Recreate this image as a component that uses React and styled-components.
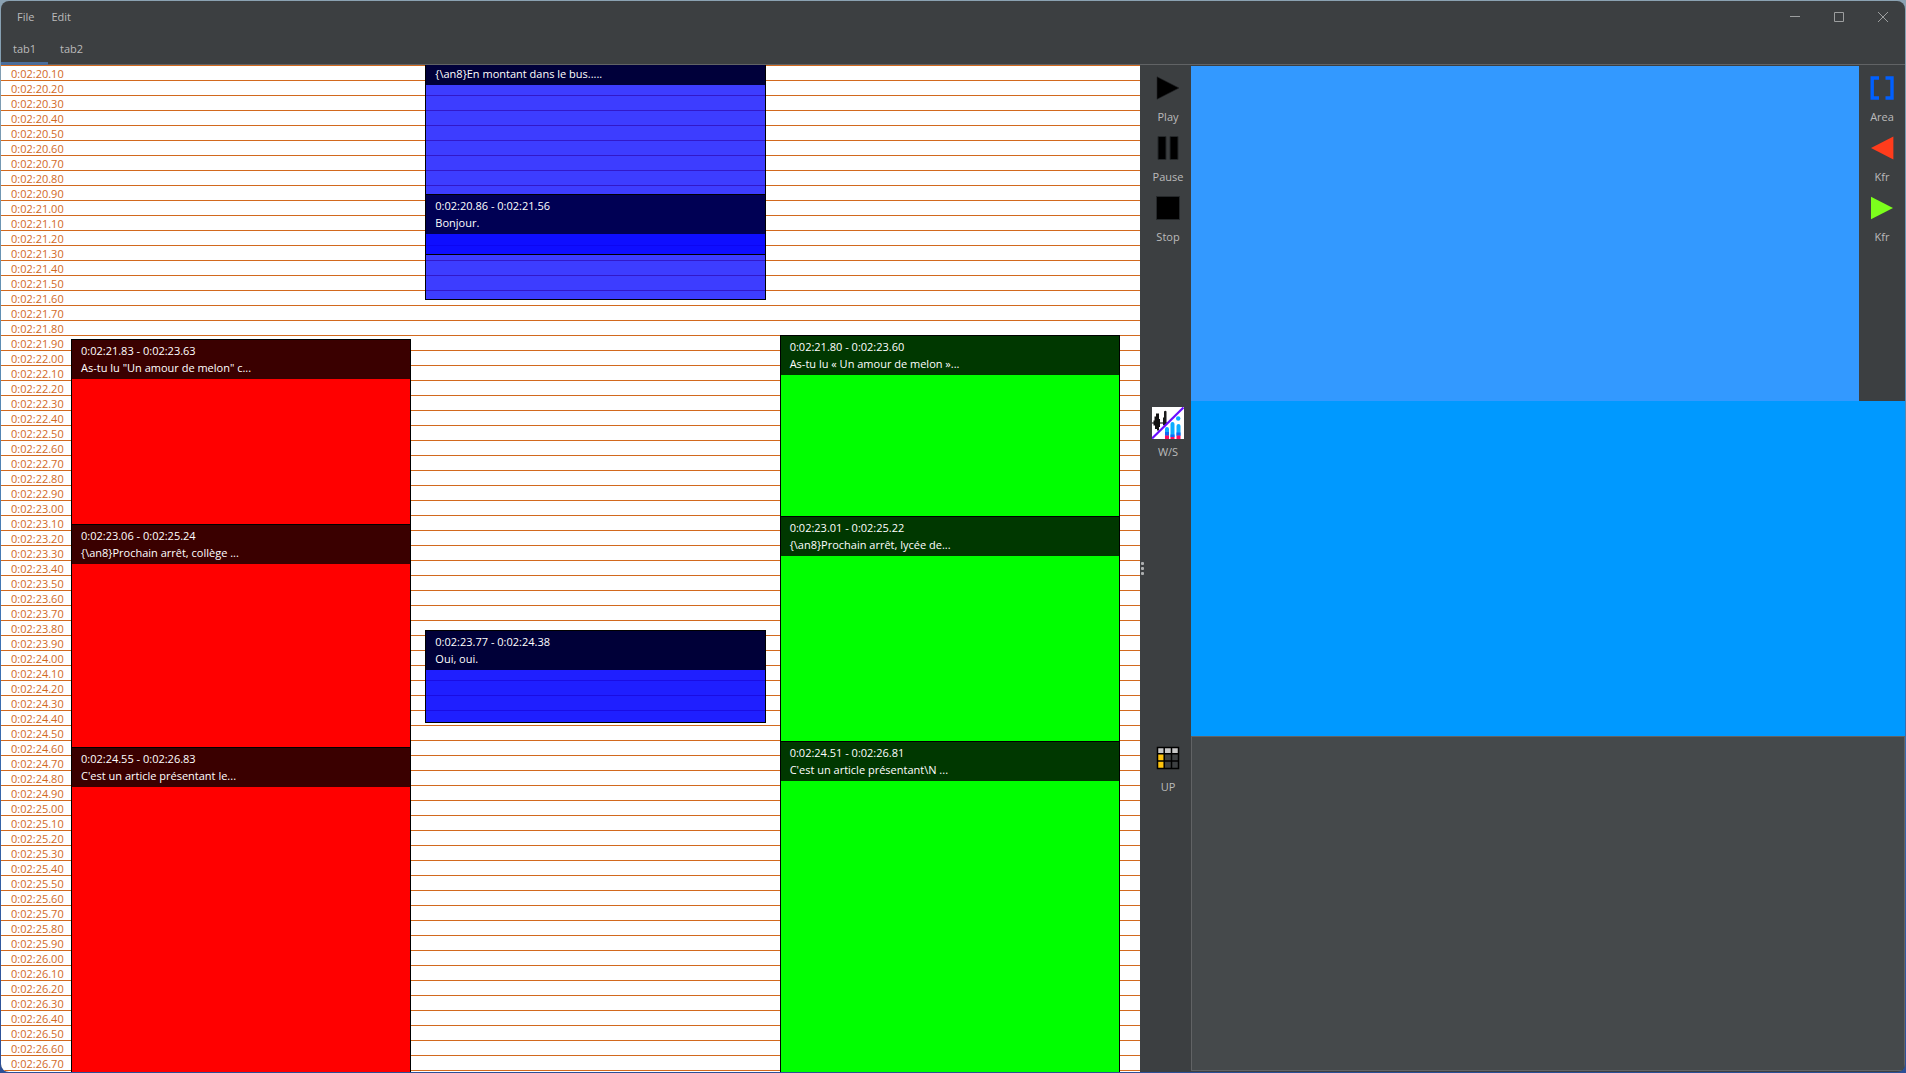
import React, { useState } from "react";
import styled, { createGlobalStyle } from "styled-components";

const GlobalStyle = createGlobalStyle`
  * { box-sizing: border-box; }
  html, body { margin: 0; padding: 0; }
  body {
    font-family: "Open Sans", "Noto Sans", sans-serif;
    font-size: 11px;
    line-height: 16px;
    color: #bbbbbb;
    overflow: hidden;
  }
  button {
    font: inherit;
    color: inherit;
    background: none;
    border: 0;
    padding: 0;
    margin: 0;
  }
`;

const Desktop = styled.div`
  height: 100vh;
  padding: 1px;
  background: linear-gradient(180deg, #8ba2b2, #5f8fb4 30%, #3c72b4 60%, #2c4f96);
`;

const Window = styled.div`
  height: 100%;
  display: flex;
  flex-direction: column;
  border-radius: 8px;
  overflow: hidden;
  background: #3c3f41;
`;

const TitleBar = styled.header`
  display: flex;
  justify-content: space-between;
  height: 32px;
  flex: none;
  padding-left: 8px;
`;

const Menu = styled.nav`
  display: flex;
  gap: 1px;
`;

const MenuItem = styled.button`
  padding: 0 8px;
`;

const WindowControls = styled.div`
  display: flex;
`;

const ControlButton = styled.button`
  width: 44px;
  display: grid;
  place-items: center;
  color: #9c9e9f;
`;

const TabBar = styled.div`
  display: flex;
  height: 32px;
  flex: none;
  border-bottom: 1px solid #616365;
`;

const Tab = styled.button`
  padding: 2px 12px 0;
  margin-bottom: -1px;
  border-bottom: 3px solid ${(p) => (p.$active ? "#4a6d9c" : "transparent")};
`;

const Workspace = styled.main`
  flex: 1;
  min-height: 0;
  display: grid;
  grid-template-columns: minmax(0, 1139fr) minmax(0, 765fr);
`;

const Timeline = styled.section`
  position: relative;
  overflow: hidden;
  background: #ffffff;
`;

const Ruler = styled.ol`
  list-style: none;
  margin: 0;
  padding: 0;
  border-bottom: 1px solid #d2691e;
`;

const Tick = styled.li`
  height: 15px;
  padding-left: 10px;
  border-top: 1px solid #d2691e;
  line-height: 15px;
  color: #d2691e;
`;

const Tracks = styled.div`
  position: absolute;
  inset: 0;
  padding: 0 20px 0 70px;
  display: grid;
  grid-template-columns: repeat(3, minmax(0, 1fr));
  gap: 14px;
`;

const Track = styled.div`
  position: relative;
`;

const Block = styled.article`
  position: absolute;
  left: 0;
  right: 0;
  background: ${(p) => p.$fill};
  padding: 1px;

  &::after {
    content: "";
    position: absolute;
    inset: 0;
    border: 1px solid #000000;
    z-index: ${(p) => (p.$raised ? 1 : "auto")};
    pointer-events: none;
  }
`;

const BlockHeader = styled.header`
  min-height: 39px;
  display: flex;
  flex-direction: column;
  justify-content: flex-end;
  padding: 2px 9px 3px;
  background: ${(p) => p.$color};
  color: #ffffff;
  line-height: 17px;
  white-space: nowrap;
`;

const SidePane = styled.section`
  display: grid;
  grid-template-columns: 5px minmax(0, 1fr);
  padding: 1px 0;
`;

const Splitter = styled.div`
  display: flex;
  flex-direction: column;
  justify-content: center;
  align-items: center;
  gap: 2px;
  cursor: col-resize;
`;

const GripDot = styled.span`
  width: 3px;
  height: 3px;
  border-radius: 1px;
  background: #adafb0;
`;

const Panels = styled.div`
  display: grid;
  grid-template-rows: repeat(3, minmax(0, 1fr));
`;

const PanelRow = styled.div`
  display: flex;
`;

const ToolRail = styled.div`
  width: 46px;
  flex: none;
  display: flex;
  flex-direction: column;
`;

const ToolButton = styled.button`
  display: flex;
  flex-direction: column;
  align-items: center;
  gap: 5px;
  padding: 6px 0 1px;
`;

const IconBox = styled.span`
  width: 32px;
  height: 32px;
  display: grid;
  place-items: center;

  svg { display: block; }
`;

const Surface = styled.div`
  flex: 1;
  min-width: 0;
  background: ${(p) => p.$color};
  border: ${(p) => (p.$framed ? "1px solid #616365" : "0")};
`;

const PlayIcon = ({ color = "#000000", edge = "#222426" }) => (
  <svg width="24" height="24" viewBox="0 0 24 24">
    <path d="M1 .8 23 12 1 23.2z" fill={color} stroke={edge} strokeWidth=".6" />
  </svg>
);

const BackIcon = () => (
  <svg width="24" height="24" viewBox="0 0 24 24">
    <path d="M23.4 .6v22.8L1 12z" fill="#ff3c1c" />
  </svg>
);

const PauseIcon = () => (
  <svg width="24" height="24" viewBox="0 0 24 24">
    <path d="M2 .5h8v23H2zM14 .5h8v23h-8z" fill="#000000" stroke="#25282a" />
  </svg>
);

const StopIcon = () => (
  <svg width="24" height="24" viewBox="0 0 24 24">
    <path d="M.5 .5h23v23H.5z" fill="#000000" stroke="#25282a" />
  </svg>
);

const AreaIcon = () => (
  <svg width="24" height="24" viewBox="0 0 24 24">
    <path d="M9 2H2.200v20H9M15.500 2h6.500v20h-6.500" fill="none" stroke="#0060ff" strokeWidth="3.400" />
  </svg>
);

const WaveSpectrumIcon = () => (
  <svg width="32" height="32" viewBox="0 0 32 32">
    <path d="M0 0h32v32H0z" fill="#ffffff" />
    <path d="M0 16h16" stroke="#444444" strokeWidth="1.4" />
    <path d="M1.500 13.500h1V9.500h1.500V6.500h3V12h1v8h-1v3.500h-2V22h-2v-3.500H1.500z" fill="#111111" />
    <path d="M11 18V11l1-1V4.500q1.500-1.500 2.500 0V17l-2 2z" fill="#1a1a1a" />
    <path d="M13 29v-7q0-2 2-2t2 2v7zM18.500 30V17q0-2 2-2t2 2v13zM24.500 29V19q0-2 2-2t2 2v10z" fill="#0cacff" />
    <circle cx="26.200" cy="11.500" r="2.200" fill="#0cacff" />
    <path d="M13 25h4v3.500h-4zM18.500 27.500h4V30h-4zM24.500 25.500h4v3h-4z" fill="#1266f5" />
    <path d="M13 28.500h4V32h-4zM18.500 30h4v2h-4zM24.500 28.500h4V32h-4z" fill="#ff0a60" />
    <path d="M0 31.500 31.500 .5" stroke="#6a0cff" strokeWidth="2.200" />
  </svg>
);

const GridIcon = () => (
  <svg width="24" height="24" viewBox="0 0 24 24">
    <path d="M1 1h22v22H1z" fill="#3c3f41" />
    <path d="M2 2h20v6H2z" fill="#c6c6c6" />
    <path d="M2 8h6v14H2z" fill="#ffc40c" />
    <path d="M1.500 1.500h21v21h-21zM8.200 1v22M15.500 1v22M1 7.800h22M1 15h22" fill="none" stroke="#000000" strokeWidth="1.500" />
  </svg>
);

const MinimizeIcon = () => (
  <svg width="12" height="12" viewBox="0 0 12 12">
    <path d="M1 5.500h10" stroke="currentColor" />
  </svg>
);

const MaximizeIcon = () => (
  <svg width="12" height="12" viewBox="0 0 12 12">
    <path d="M1.500 1.500h9v9h-9z" fill="none" stroke="currentColor" />
  </svg>
);

const CloseIcon = () => (
  <svg width="12" height="12" viewBox="0 0 12 12">
    <path d="M1 1l10 10M11 1L1 11" fill="none" stroke="currentColor" />
  </svg>
);

// All times are in hundredths of a second.
const ORIGIN = 14000;
const PX_PER_CS = 15 / 10;

const formatTime = (cs) => {
  const pad = (n) => String(n).padStart(2, "0");
  const seconds = Math.floor(cs / 100);
  return `${Math.floor(seconds / 3600)}:${pad(Math.floor(seconds / 60) % 60)}:${pad(seconds % 60)}.${pad(cs % 100)}`;
};

const offset = (cs) => Math.floor((cs - ORIGIN) * PX_PER_CS);

const ticks = Array.from({ length: 67 }, (_, i) => ORIGIN + (i + 1) * 10);

const tracks = [
  {
    name: "red",
    blocks: [
      { start: 14183, end: 14363, text: 'As-tu lu "Un amour de melon" c...', fill: "#ff0000", header: "#3a0000" },
      { start: 14306, end: 14524, text: "{\\an8}Prochain arrêt, collège ...", fill: "#ff0000", header: "#3a0000" },
      { start: 14455, end: 14683, text: "C'est un article présentant le...", fill: "#ff0000", header: "#3a0000" },
    ],
  },
  {
    name: "blue",
    blocks: [
      { start: 13987, end: 14126, text: "{\\an8}En montant dans le bus.....", fill: "rgba(0, 0, 255, 0.76)", header: "#00003a", raised: true },
      { start: 14086, end: 14156, text: "Bonjour.", fill: "rgba(0, 0, 255, 0.76)", header: "#000054", raised: true },
      { start: 14377, end: 14438, text: "Oui, oui.", fill: "rgba(0, 0, 255, 0.88)", header: "#000038" },
    ],
  },
  {
    name: "green",
    blocks: [
      { start: 14180, end: 14360, text: "As-tu lu « Un amour de melon »...", fill: "#00ff00", header: "#003800" },
      { start: 14301, end: 14522, text: "{\\an8}Prochain arrêt, lycée de...", fill: "#00ff00", header: "#003800" },
      { start: 14451, end: 14681, text: "C'est un article présentant\\N ...", fill: "#00ff00", header: "#003800" },
    ],
  },
];

const Tool = ({ icon, label }) => (
  <ToolButton type="button">
    <IconBox>{icon}</IconBox>
    <span>{label}</span>
  </ToolButton>
);

// A block that starts above the visible range shows no time line.
const SubtitleBlock = ({ start, end, text, fill, header, raised }) => (
  <Block
    $fill={fill}
    $raised={raised}
    style={{ top: offset(start), height: offset(end) - offset(start) + 1 }}
  >
    <BlockHeader $color={header}>
      {start >= ORIGIN && <div>{`${formatTime(start)} - ${formatTime(end)}`}</div>}
      <div>{text}</div>
    </BlockHeader>
  </Block>
);

export default function App() {
  const [tab, setTab] = useState("tab1");

  return (
    <>
      <GlobalStyle />
      <Desktop>
        <Window>
          <TitleBar>
            <Menu>
              <MenuItem type="button">File</MenuItem>
              <MenuItem type="button">Edit</MenuItem>
            </Menu>
            <WindowControls>
              <ControlButton type="button" aria-label="Minimize"><MinimizeIcon /></ControlButton>
              <ControlButton type="button" aria-label="Maximize"><MaximizeIcon /></ControlButton>
              <ControlButton type="button" aria-label="Close"><CloseIcon /></ControlButton>
            </WindowControls>
          </TitleBar>
          <TabBar role="tablist">
            {["tab1", "tab2"].map((name) => (
              <Tab
                key={name}
                type="button"
                role="tab"
                aria-selected={tab === name}
                $active={tab === name}
                onClick={() => setTab(name)}
              >
                {name}
              </Tab>
            ))}
          </TabBar>
          <Workspace>
            <Timeline>
              <Ruler>
                {ticks.map((t) => (
                  <Tick key={t}>{formatTime(t)}</Tick>
                ))}
              </Ruler>
              <Tracks>
                {tracks.map((track) => (
                  <Track key={track.name}>
                    {track.blocks.map((block) => (
                      <SubtitleBlock key={block.start} {...block} />
                    ))}
                  </Track>
                ))}
              </Tracks>
            </Timeline>
            <SidePane>
              <Splitter>
                <GripDot />
                <GripDot />
                <GripDot />
              </Splitter>
              <Panels>
                <PanelRow>
                  <ToolRail>
                    <Tool icon={<PlayIcon />} label="Play" />
                    <Tool icon={<PauseIcon />} label="Pause" />
                    <Tool icon={<StopIcon />} label="Stop" />
                  </ToolRail>
                  <Surface $color="#3399ff" />
                  <ToolRail>
                    <Tool icon={<AreaIcon />} label="Area" />
                    <Tool icon={<BackIcon />} label="Kfr" />
                    <Tool icon={<PlayIcon color="#7cff1c" edge="none" />} label="Kfr" />
                  </ToolRail>
                </PanelRow>
                <PanelRow>
                  <ToolRail>
                    <Tool icon={<WaveSpectrumIcon />} label="W/S" />
                  </ToolRail>
                  <Surface $color="#0099ff" />
                </PanelRow>
                <PanelRow>
                  <ToolRail>
                    <Tool icon={<GridIcon />} label="UP" />
                  </ToolRail>
                  <Surface $color="#45494b" $framed />
                </PanelRow>
              </Panels>
            </SidePane>
          </Workspace>
        </Window>
      </Desktop>
    </>
  );
}
